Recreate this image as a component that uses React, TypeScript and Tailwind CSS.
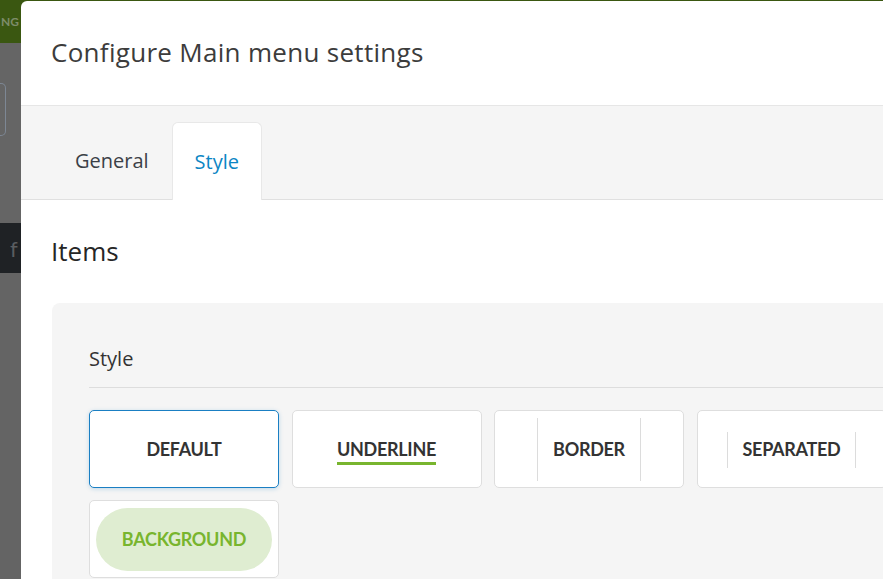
import React from "react";

type StyleOption = {
  id: string;
  label: string;
  variant: "default" | "underline" | "border" | "separated" | "background";
};

const OPTIONS: StyleOption[] = [
  { id: "default", label: "DEFAULT", variant: "default" },
  { id: "underline", label: "UNDERLINE", variant: "underline" },
  { id: "border", label: "BORDER", variant: "border" },
  { id: "separated", label: "SEPARATED", variant: "separated" },
  { id: "background", label: "BACKGROUND", variant: "background" },
];

const SEGOE = "font-['Segoe_UI','Open_Sans',sans-serif]";

function OptionCard({ option, selected }: { option: StyleOption; selected: boolean }) {
  const base =
    "flex h-[78px] w-[190px] items-center justify-center rounded-[5px] border bg-white p-[6px] pt-[7px] font-['Lato',sans-serif] text-[18px] font-bold tracking-[-0.3px] text-[#333]";
  const frame = selected
    ? "border-[#1a7fc3] shadow-[0_1px_4px_rgba(26,127,195,0.25)]"
    : "border-[#dedede]";

  return (
    <button type="button" className={`${base} ${frame}`}>
      {option.variant === "default" && <span>{option.label}</span>}
      {option.variant === "underline" && (
        <span className="mt-[4px] border-b-[3px] border-[#78b52e] pb-[2px] leading-[22px]">
          {option.label}
        </span>
      )}
      {option.variant === "border" && (
        <span className="flex h-full items-center border-x border-[#dcdcdc] px-[15px]">
          {option.label}
        </span>
      )}
      {option.variant === "separated" && (
        <span className="flex h-[36px] items-center border-x border-[#dcdcdc] px-[15px]">
          {option.label}
        </span>
      )}
      {option.variant === "background" && (
        <span className="flex h-full w-full items-center justify-center rounded-full bg-[#dfedd1] text-[#78b52e]">
          {option.label}
        </span>
      )}
    </button>
  );
}

function Backdrop() {
  return (
    <div className="flex h-full w-[21px] flex-col bg-[#656565]">
      <div className="flex h-[42px] items-center overflow-hidden bg-[#3a5711] font-['Lato',sans-serif] text-[12px] font-bold text-[#7d8c6a]">
        <span className="pl-[1px]">NG</span>
      </div>
      <div className="mt-[40px] h-[53px] w-[6px] rounded-r-[5px] border border-l-0 border-[#7d8794]" />
      <div className="mt-[87px] flex h-[50px] items-center bg-[#1f2225] pl-[10px] font-['Lato',sans-serif] text-[22px] text-[#5a5d60]">
        f
      </div>
      <div className="flex-1 bg-[#646464]" />
    </div>
  );
}

export default function App() {
  const selected = "default";

  return (
    <div className="relative h-[579px] w-[883px] overflow-hidden bg-[#3a5711]">
      <div className="absolute inset-x-0 bottom-0 top-[1px] flex">
        <Backdrop />
      </div>

      {/* modal */}
      <div className={`absolute left-[21px] top-[1px] w-[900px] overflow-hidden rounded-tl-[6px] bg-white ${SEGOE}`}>
        <div className="flex h-[105px] items-center border-b border-[#e6e6e6] pb-[2px] pl-[30px]">
          <h2 className="text-[26px] font-normal tracking-[0.3px] text-[#3c3c3c]">
            Configure Main menu settings
          </h2>
        </div>

        <div className="flex h-[94px] items-end border-b border-[#e0e0e0] bg-[#f5f5f5] pl-[31px]">
          <div className="-mb-px flex">
            <div className="flex h-[78px] items-center px-[23px] text-[20px] text-[#3b4047]">
              General
            </div>
            <div className="flex h-[78px] items-center rounded-t-[6px] border border-b-0 border-[#e8e8e8] bg-white px-[22px] text-[20px] text-[#0c86c4]">
              Style
            </div>
          </div>
        </div>

        <div className="pl-[30px] pt-[34px]">
          <h3 className="text-[26px] font-normal leading-[34px] text-[#262626]">Items</h3>

          <div className="ml-px mt-[35px] h-[400px] rounded-tl-[8px] bg-[#f5f5f5] pl-[37px] pt-[42px]">
            <div className="border-b border-[#dddddd] pb-[14px] text-[20px] leading-[28px] text-[#333]">
              Style
            </div>
            <div className="mt-[22px] flex flex-wrap gap-x-[12.5px] gap-y-[12px]">
              {OPTIONS.map((o) => (
                <OptionCard key={o.id} option={o} selected={o.id === selected} />
              ))}
            </div>
          </div>
        </div>
      </div>
    </div>
  );
}
